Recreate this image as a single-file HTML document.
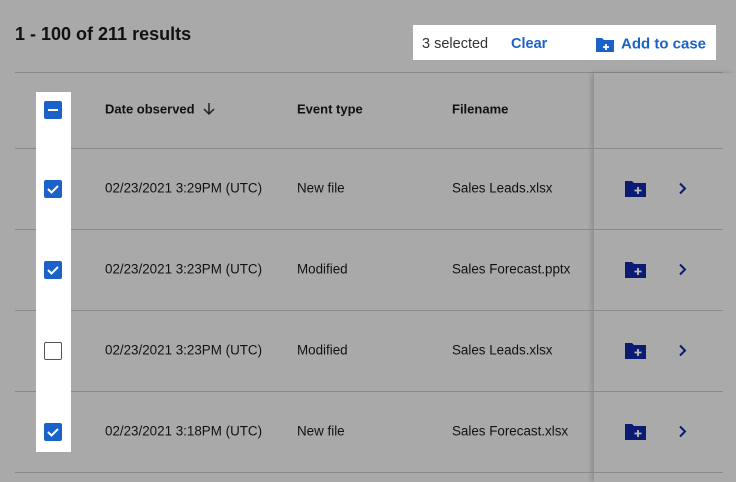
<!DOCTYPE html>
<html><head><style>
body{margin:0;width:736px;height:482px;background:#a9a9a9;font-family:"Liberation Sans",sans-serif;position:relative;overflow:hidden;color:#111}
.a{position:absolute}
.line{position:absolute;left:15px;width:708px;height:1px;background:#8a8a8a}
.t{position:absolute;font-size:13.4px;white-space:nowrap;transform:translateY(-50%)}
.h{font-weight:bold;font-size:13px}
.cb{position:absolute;left:44px;width:18px;height:18px;border-radius:2px;background:#1b62c8;box-sizing:border-box}
.cb.e{background:#fff;border:1.5px solid #555}
</style></head><body>
<div class="a" style="left:15px;top:24px;font-size:18px;font-weight:bold;color:#111">1 - 100 of 211 results</div>
<div class="a" style="left:413px;top:25px;width:303px;height:35px;background:#fff"></div>
<div class="t" style="left:422px;top:44px;font-size:14.5px;color:#333">3 selected</div>
<div class="t h" style="left:511px;top:44px;font-size:14.5px;color:#1b62c8">Clear</div>
<svg class="a" style="left:595px;top:37px" width="20" height="16" viewBox="0 0 20 16"><path d="M1 1h6l2 2h10v12H1z" fill="#1b62c8"/><path d="M11 7v6M8 10h6" stroke="#fff" stroke-width="1.8"/></svg>
<div class="t h" style="left:621px;top:44px;font-size:15px;color:#1b62c8">Add to case</div>
<div class="line" style="top:72px"></div>
<div class="a" style="left:594px;top:73px;width:142px;height:409px;background:#aaa;box-shadow:-3px 0 4px rgba(0,0,0,.15)"></div>
<div class="line" style="top:148px"></div>
<div class="line" style="top:229px"></div>
<div class="line" style="top:310px"></div>
<div class="line" style="top:391px"></div>
<div class="line" style="top:472px"></div>
<div class="a" style="left:36px;top:92px;width:35px;height:360px;background:#fff"></div>
<div class="cb" style="top:101px"><div class="a" style="left:4px;top:8px;width:10px;height:2px;background:#fff"></div></div>
<div class="t h" style="left:105px;top:109px">Date observed</div>
<svg class="a" style="left:203px;top:102px" width="12" height="14" viewBox="0 0 12 14"><path d="M6 1v11M1 7l5 5 5-5" stroke="#222" stroke-width="1.5" fill="none"/></svg>
<div class="t h" style="left:297px;top:109px">Event type</div>
<div class="t h" style="left:452px;top:109px">Filename</div>

<div class="cb" style="top:180px"><svg width="18" height="18"><path d="M4 9l3.5 3.5L14 6" stroke="#fff" stroke-width="2" fill="none"/></svg></div>
<div class="cb" style="top:261px"><svg width="18" height="18"><path d="M4 9l3.5 3.5L14 6" stroke="#fff" stroke-width="2" fill="none"/></svg></div>
<div class="cb e" style="top:342px"></div>
<div class="cb" style="top:423px"><svg width="18" height="18"><path d="M4 9l3.5 3.5L14 6" stroke="#fff" stroke-width="2" fill="none"/></svg></div>

<div class="t" style="left:105px;top:188px">02/23/2021 3:29PM (UTC)</div><div class="t" style="left:297px;top:188px">New file</div><div class="t" style="left:452px;top:188px">Sales Leads.xlsx</div>
<div class="t" style="left:105px;top:269px">02/23/2021 3:23PM (UTC)</div><div class="t" style="left:297px;top:269px">Modified</div><div class="t" style="left:452px;top:269px">Sales Forecast.pptx</div>
<div class="t" style="left:105px;top:350px">02/23/2021 3:23PM (UTC)</div><div class="t" style="left:297px;top:350px">Modified</div><div class="t" style="left:452px;top:350px">Sales Leads.xlsx</div>
<div class="t" style="left:105px;top:431px">02/23/2021 3:18PM (UTC)</div><div class="t" style="left:297px;top:431px">New file</div><div class="t" style="left:452px;top:431px">Sales Forecast.xlsx</div>

<svg class="a" style="left:625px;top:180px" width="21" height="17" viewBox="0 0 21 17"><path d="M0 1h7l2 2h12v14H0z" fill="#0b1a72"/><path d="M13 7v7M9.5 10.5h7" stroke="#bbb" stroke-width="1.8"/></svg>
<svg class="a" style="left:625px;top:261px" width="21" height="17" viewBox="0 0 21 17"><path d="M0 1h7l2 2h12v14H0z" fill="#0b1a72"/><path d="M13 7v7M9.5 10.5h7" stroke="#bbb" stroke-width="1.8"/></svg>
<svg class="a" style="left:625px;top:342px" width="21" height="17" viewBox="0 0 21 17"><path d="M0 1h7l2 2h12v14H0z" fill="#0b1a72"/><path d="M13 7v7M9.5 10.5h7" stroke="#bbb" stroke-width="1.8"/></svg>
<svg class="a" style="left:625px;top:423px" width="21" height="17" viewBox="0 0 21 17"><path d="M0 1h7l2 2h12v14H0z" fill="#0b1a72"/><path d="M13 7v7M9.5 10.5h7" stroke="#bbb" stroke-width="1.8"/></svg>
<svg class="a" style="left:678px;top:182px" width="10" height="13"><path d="M2 1.5l5 5-5 5" stroke="#0b1a72" stroke-width="2" fill="none"/></svg>
<svg class="a" style="left:678px;top:263px" width="10" height="13"><path d="M2 1.5l5 5-5 5" stroke="#0b1a72" stroke-width="2" fill="none"/></svg>
<svg class="a" style="left:678px;top:344px" width="10" height="13"><path d="M2 1.5l5 5-5 5" stroke="#0b1a72" stroke-width="2" fill="none"/></svg>
<svg class="a" style="left:678px;top:425px" width="10" height="13"><path d="M2 1.5l5 5-5 5" stroke="#0b1a72" stroke-width="2" fill="none"/></svg>
</body></html>
